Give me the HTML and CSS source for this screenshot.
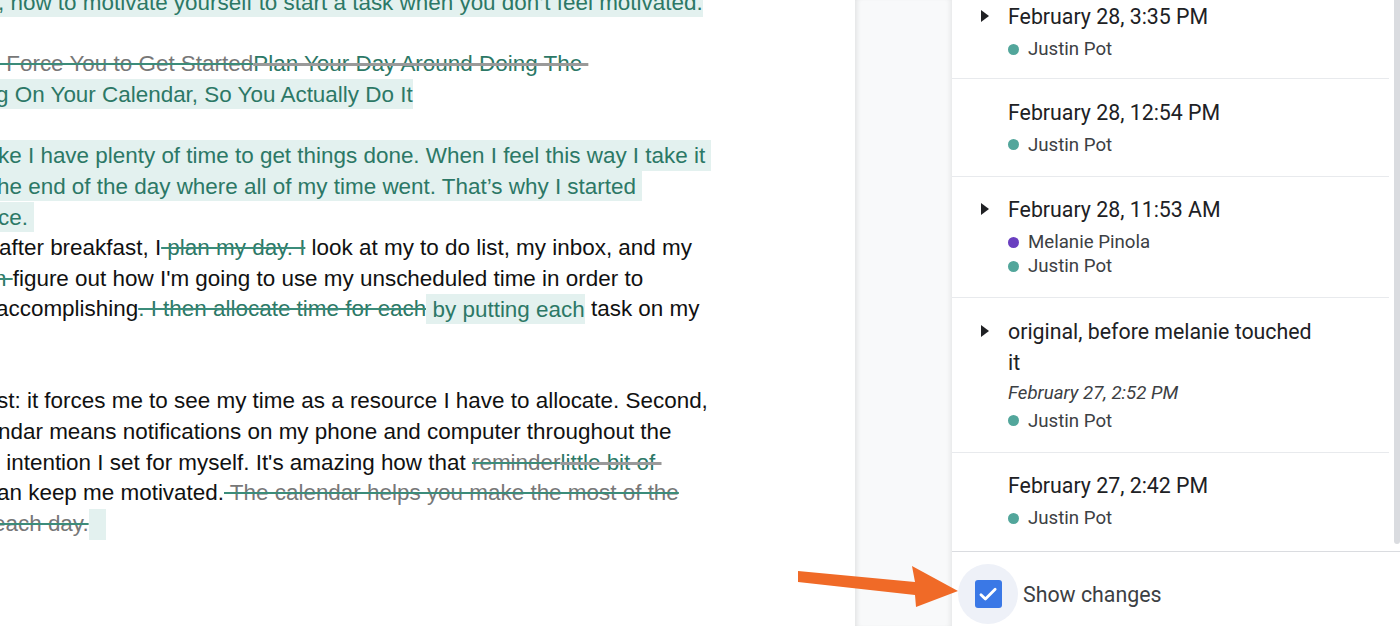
FILE: index.html
```html
<!DOCTYPE html>
<html lang="en">
<head>
<meta charset="utf-8">
<title>Version history</title>
<link rel="stylesheet" href="styles.css">
</head>
<body>
<div class="app">
  <main class="doc">
    <div class="page">
      <div class="line cut-2"><span class="ins">, how to motivate yourself to start a task when you don’t feel motivated.</span></div>
      <div class="line">&nbsp;</div>
      <div class="line"><span class="del-g"> Force You to Get Started</span><span class="del-old">Plan Your Day Around Doing The </span></div>
      <div class="line cut-4"><span class="ins">g On Your Calendar, So You Actually Do It</span></div>
      <div class="line">&nbsp;</div>
      <div class="line cut-2"><span class="ins">ke I have plenty of time to get things done. When I feel this way I take it </span></div>
      <div class="line cut-3"><span class="ins">he end of the day where all of my time went. That’s why I started </span></div>
      <div class="line cut-2"><span class="ins">ce. </span></div>
      <div class="line cut-1">after breakfast, I<span class="del"> plan my day. I</span> look at my to do list, my inbox, and my</div>
      <div class="line cut-5"><span class="del">n </span>figure out how I'm going to use my unscheduled time in order to</div>
      <div class="line cut-4">accomplishing<span class="del">. I then allocate time for each</span><span class="ins"> by putting each</span> task on my</div>
      <div class="line">&nbsp;</div>
      <div class="line">&nbsp;</div>
      <div class="line cut-3">st: it forces me to see my time as a resource I have to allocate. Second,</div>
      <div class="line cut-2">ndar means notifications on my phone and computer throughout the</div>
      <div class="line"> intention I set for myself. It's amazing how that <span class="del-g">reminder</span><span class="del-old">little bit of </span></div>
      <div class="line cut-3">an keep me motivated.<span class="del-g"> The calendar helps you make the most of the</span></div>
      <div class="line cut-7"><span class="del-g">each day.</span><span class="ins-mark"></span></div>
    </div>
  </main>

  <div class="gutter"></div>

  <aside class="history">
    <div class="list">
      <div class="items">
        <div class="item first">
          <span class="caret"></span>
          <div class="title">February 28, 3:35 PM</div>
          <div class="who"><span class="dot teal"></span>Justin Pot</div>
        </div>
        <div class="item">
          <div class="title">February 28, 12:54 PM</div>
          <div class="who"><span class="dot teal"></span>Justin Pot</div>
        </div>
        <div class="item">
          <span class="caret"></span>
          <div class="title">February 28, 11:53 AM</div>
          <div class="who"><span class="dot purple"></span>Melanie Pinola</div>
          <div class="who"><span class="dot teal"></span>Justin Pot</div>
        </div>
        <div class="item">
          <span class="caret"></span>
          <div class="title">original, before melanie touched it</div>
          <div class="date">February 27, 2:52 PM</div>
          <div class="who"><span class="dot teal"></span>Justin Pot</div>
        </div>
        <div class="item">
          <div class="title">February 27, 2:42 PM</div>
          <div class="who"><span class="dot teal"></span>Justin Pot</div>
        </div>
      </div>
      <div class="scrollbar"></div>
    </div>
    <footer class="footer">
      <label class="toggle">
        <span class="halo">
          <span class="checkbox">
            <svg viewBox="0 0 24 24" width="26" height="26"><path d="M5.5 12.6l4.1 4.1L18.6 7.6" fill="none" stroke="#fff" stroke-width="2.6" stroke-linecap="round" stroke-linejoin="round"/></svg>
          </span>
        </span>
        <span class="toggle-label">Show changes</span>
      </label>
    </footer>
  </aside>

  <svg class="pointer" viewBox="0 0 170 60" width="170" height="60">
    <polygon points="3,11 120,22 117,6 163,31 121,47 120,35 3,22" fill="#f06a27"/>
  </svg>
</div>
</body>
</html>
```

FILE: styles.css
```css
html, body {
  margin: 0;
  padding: 0;
  background: #fff;
}

body {
  width: 1400px;
  height: 626px;
  overflow: hidden;
}

.app {
  position: relative;
  display: flex;
  height: 626px;
}

/* ---------- document ---------- */
.doc {
  width: 855px;
  flex: none;
  overflow: hidden;
  background: #fff;
}

.page {
  margin-top: -12.6px;
  font-family: "Liberation Sans", Arial, sans-serif;
  font-size: 22.45px;
  line-height: 30.7px;
  color: #111;
}

.line {
  white-space: pre;
  height: 30.7px;
}

.cut-1 { margin-left: -1px; }
.cut-2 { margin-left: -2px; }
.cut-3 { margin-left: -3px; }
.cut-4 { margin-left: -4px; }
.cut-5 { margin-left: -6px; }
.cut-7 { margin-left: -7px; }

.ins {
  color: #2c7866;
  background: #e3f1ef;
  padding: 2.7px 0;
}

.ins-mark {
  display: inline-block;
  vertical-align: top;
  width: 17px;
  height: 30.7px;
  background: #e3f1ef;
}

.del {
  color: #2c7866;
  text-decoration: line-through;
  text-decoration-color: #3b8c7a;
  text-decoration-thickness: 2px;
}

.del-g {
  color: #777;
  text-decoration: line-through;
  text-decoration-color: #3b8c7a;
  text-decoration-thickness: 2px;
}

.del-old {
  color: #2c7866;
  text-decoration: line-through;
  text-decoration-color: #9a9a9a;
  text-decoration-thickness: 3px;
}

/* ---------- gutter ---------- */
.gutter {
  width: 97px;
  flex: none;
  background: #f8f9fa;
  box-shadow: inset 5px 0 5px -3px rgba(0, 0, 0, 0.09),
              inset -5px 0 5px -3px rgba(0, 0, 0, 0.07);
}

/* ---------- history panel ---------- */
.history {
  flex: 1;
  display: flex;
  flex-direction: column;
  background: #fff;
  font-family: Roboto, "Noto Sans", sans-serif;
  min-width: 0;
}

.list {
  flex: 1;
  display: flex;
  overflow: hidden;
  min-height: 0;
}

.items {
  width: 437px;
  flex: none;
  margin-top: -16.3px;
}

.item {
  display: grid;
  grid-template-columns: 56px 1fr;
  padding: 17.5px 0 19px;
  border-top: 1px solid #e8eaed;
}

.item.first {
  border-top: none;
  padding-bottom: 17px;
}

.caret {
  grid-column: 1;
  grid-row: 1;
  justify-self: end;
  margin: 9px 19px 0 0;
  width: 0;
  height: 0;
  border-top: 6.5px solid transparent;
  border-bottom: 6.5px solid transparent;
  border-left: 8px solid #202124;
}

.title {
  grid-column: 2;
  grid-row: 1;
  font-size: 21.33px;
  line-height: 31px;
  color: #202124;
  padding-right: 70px;
  margin-bottom: 5px;
}

.date {
  grid-column: 2;
  font-size: 18.67px;
  line-height: 24px;
  font-style: italic;
  color: #3c4043;
  margin: -2px 0 4px;
}

.who {
  grid-column: 2;
  display: flex;
  align-items: center;
  font-size: 18.67px;
  line-height: 24px;
  color: #3c4043;
}

.dot {
  width: 11px;
  height: 11px;
  border-radius: 50%;
  margin-right: 9px;
  flex: none;
}

.dot.teal { background: #52a69b; }
.dot.purple { background: #6a3fc0; }

.scrollbar {
  margin-left: 5px;
  width: 6px;
  height: 544px;
  background: #dadce0;
  border-radius: 0 0 4px 4px;
}

.footer {
  flex: none;
  height: 74px;
  border-top: 1px solid #dadce0;
  display: flex;
  align-items: flex-start;
}

.toggle {
  display: flex;
  align-items: center;
  margin: 12px 0 0 6px;
}

.halo {
  width: 60px;
  height: 60px;
  border-radius: 50%;
  background: #eef1f8;
  display: flex;
  align-items: center;
  justify-content: center;
}

.checkbox {
  width: 27px;
  height: 28px;
  border-radius: 3px;
  background: #3a78e6;
  display: flex;
  align-items: center;
  justify-content: center;
}

.toggle-label {
  margin-left: 5px;
  font-size: 21.33px;
  color: #3c4043;
}

/* ---------- annotation arrow ---------- */
.pointer {
  position: absolute;
  left: 795px;
  top: 560px;
}
```
